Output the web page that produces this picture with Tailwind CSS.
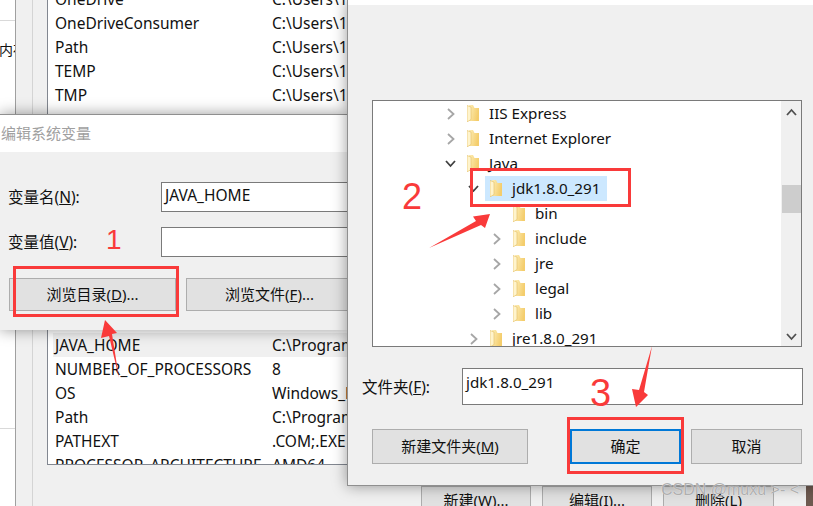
<!DOCTYPE html>
<html lang="zh-CN">
<head>
<meta charset="UTF-8">
<title>编辑系统变量</title>
<script src="https://cdn.jsdelivr.net/npm/@tailwindcss/browser@4"></script>
</head>
<body class="m-0 overflow-hidden bg-white">
<!-- shared tree icons -->
<svg class="absolute w-0 h-0">
  <defs>
    <linearGradient id="folderFill" x1="0" y1="0" x2="1" y2="0.3">
      <stop offset="0" stop-color="#fdeeb8"/>
      <stop offset="1" stop-color="#f4cd6c"/>
    </linearGradient>
  </defs>
  <symbol id="folder" viewBox="0 0 12 17">
    <path d="M2 0h4l1.500 3H12v13H2z" fill="url(#folderFill)"/>
    <path d="M0 .5L4 2v12.500L0 17z" fill="#fff4cc" stroke="#e3bd62" stroke-width=".6"/>
  </symbol>
  <symbol id="closed" viewBox="0 0 8 12">
    <path d="M1 1l5.500 5L1 11" fill="none" stroke="#a6a6a6" stroke-width="1.800"/>
  </symbol>
  <symbol id="open" viewBox="0 0 11 8">
    <path d="M1 1l4.500 5L10 1" fill="none" stroke="#404040" stroke-width="1.800"/>
  </symbol>
</svg>

<div class="relative w-[813px] h-[506px] overflow-hidden text-[15.5px] text-[#111] font-['Noto_Sans','Noto_Sans_CJK_SC',sans-serif]">

  <!-- back window: environment variables -->
  <div class="absolute inset-0 flex">
    <div class="w-[15px] shrink-0 bg-white overflow-hidden flex flex-col">
      <div class="h-[21px] border-b border-[#d9d9d9]"></div>
      <div class="mt-[19px] -ml-[1px] whitespace-nowrap text-[14px] leading-5">内存</div>
      <div class="mt-[368px] border-b border-[#d9d9d9]"></div>
    </div>
    <div class="w-[17px] shrink-0 bg-[#f0f0f0] border-l border-[#a0a0a0]"></div>
    <div class="flex-1 bg-[#f0f0f0] border-l border-[#d4d4d4] pl-[14px] flex flex-col">
      <!-- user vars -->
      <div class="w-[302px] h-[150px] -mt-[13px] bg-white border-l border-[#828790] overflow-hidden shrink-0 leading-6 whitespace-nowrap">
        <div class="flex h-6 pl-[7px]"><span class="w-[217px] shrink-0">OneDrive</span><span>C:\Users\1</span></div>
        <div class="flex h-6 pl-[7px]"><span class="w-[217px] shrink-0">OneDriveConsumer</span><span>C:\Users\1</span></div>
        <div class="flex h-6 pl-[7px]"><span class="w-[217px] shrink-0">Path</span><span>C:\Users\1</span></div>
        <div class="flex h-6 pl-[7px]"><span class="w-[217px] shrink-0">TEMP</span><span>C:\Users\1</span></div>
        <div class="flex h-6 pl-[7px]"><span class="w-[217px] shrink-0">TMP</span><span>C:\Users\1</span></div>
      </div>
      <!-- system vars -->
      <div class="w-[302px] h-[170px] mt-[158px] pt-[38px] bg-white border-l border-b border-[#828790] overflow-hidden shrink-0 leading-6 whitespace-nowrap">
        <div class="flex h-6 ml-[5px] pl-[2px] bg-[#f0f0f0]"><span class="w-[217px] shrink-0">JAVA_HOME</span><span>C:\Program</span></div>
        <div class="flex h-6 pl-[7px]"><span class="w-[217px] shrink-0">NUMBER_OF_PROCESSORS</span><span>8</span></div>
        <div class="flex h-6 pl-[7px]"><span class="w-[217px] shrink-0">OS</span><span>Windows_NT</span></div>
        <div class="flex h-6 pl-[7px]"><span class="w-[217px] shrink-0">Path</span><span>C:\Program</span></div>
        <div class="flex h-6 pl-[7px]"><span class="w-[217px] shrink-0">PATHEXT</span><span>.COM;.EXE</span></div>
        <div class="flex h-6 pl-[7px]"><span class="w-[217px] shrink-0 overflow-hidden">PROCESSOR_ARCHITECTURE</span><span>AMD64</span></div>
      </div>
      <div class="mt-[21px] ml-[374px] flex gap-[11px] text-center whitespace-nowrap text-[15px]">
        <div class="w-[110px] h-[28px] shrink-0 bg-[#e1e1e1] border border-[#adadad] leading-[26px]">新建(W)...</div>
        <div class="w-[110px] h-[28px] shrink-0 bg-[#e1e1e1] border border-[#adadad] leading-[26px]">编辑(I)...</div>
        <div class="w-[111px] h-[28px] shrink-0 bg-[#e1e1e1] border border-[#adadad] leading-[26px]">删除(L)</div>
      </div>
    </div>
  </div>
  <div class="absolute right-0 top-[486px] w-[7px] h-[20px] bg-[#6e5a50]"></div>

  <!-- edit variable dialog -->
  <div class="absolute left-0 top-[114px] w-[347px] h-[216px] bg-[#f0f0f0] border-t border-[#8f8f8f] shadow-[0_0_14px_rgba(0,0,0,0.4)]">
    <div class="h-[37px] bg-white pl-[1px] text-[15px] text-[#a0a0a0] leading-[37px]">编辑系统变量</div>
    <div class="pl-[8px] pt-[30px] flex items-center">
      <span class="w-[153px] leading-5">变量名(<u>N</u>):</span>
      <div class="flex-1 h-[30px] bg-white border border-r-0 border-[#7a7a7a] pl-[3px] leading-[25px]">JAVA_HOME</div>
    </div>
    <div class="pl-[8px] pt-[15px] flex items-center">
      <span class="w-[153px] leading-5">变量值(<u>V</u>):</span>
      <div class="flex-1 h-[30px] bg-white border border-r-0 border-[#7a7a7a]"></div>
    </div>
    <div class="pl-[9px] pt-[21px] flex gap-[10px] text-center text-[15px]">
      <div class="w-[167px] h-[33px] bg-[#e1e1e1] border border-[#adadad] leading-[31px]">浏览目录(<u>D</u>)...</div>
      <div class="flex-1 h-[33px] pl-[5px] bg-[#e1e1e1] border border-r-0 border-[#adadad] leading-[31px]">浏览文件(<u>F</u>)...</div>
    </div>
  </div>

  <!-- browse folder dialog -->
  <div class="absolute left-[347px] top-0 w-[480px] h-[486px] bg-[#f0f0f0] border-l border-b border-[#8f8f8f] shadow-[0_0_14px_rgba(0,0,0,0.4)]">
    <div class="h-[5px] bg-white"></div>
    <div class="ml-[24px] mt-[95px] w-[430px] h-[247px] flex bg-white border border-[#7a7a7a] overflow-hidden">
      <div class="flex-1 leading-[25px] text-[15.2px]">
        <div class="flex items-center h-[25px] pl-[74px]">
          <svg class="w-[8px] h-[12px] mr-[12px] shrink-0"><use href="#closed"/></svg>
          <svg class="w-[12px] h-[17px] mr-[10px] shrink-0"><use href="#folder"/></svg>
          <span>IIS Express</span>
        </div>
        <div class="flex items-center h-[25px] pl-[74px]">
          <svg class="w-[8px] h-[12px] mr-[12px] shrink-0"><use href="#closed"/></svg>
          <svg class="w-[12px] h-[17px] mr-[10px] shrink-0"><use href="#folder"/></svg>
          <span>Internet Explorer</span>
        </div>
        <div class="flex items-center h-[25px] pl-[72px]">
          <svg class="w-[11px] h-[8px] mr-[11px] shrink-0"><use href="#open"/></svg>
          <svg class="w-[12px] h-[17px] mr-[10px] shrink-0"><use href="#folder"/></svg>
          <span>Java</span>
        </div>
        <div class="flex items-center h-[25px] pl-[95px]">
          <svg class="w-[11px] h-[8px] mr-[6px] shrink-0"><use href="#open"/></svg>
          <div class="flex items-center h-[25px] w-[122px] pl-[5px] bg-[#cce8ff]">
            <svg class="w-[12px] h-[17px] mr-[10px] shrink-0"><use href="#folder"/></svg>
            <span>jdk1.8.0_291</span>
          </div>
        </div>
        <div class="flex items-center h-[25px] pl-[120px]">
          <div class="w-[20px] shrink-0"></div>
          <svg class="w-[12px] h-[17px] mr-[10px] shrink-0"><use href="#folder"/></svg>
          <span>bin</span>
        </div>
        <div class="flex items-center h-[25px] pl-[120px]">
          <svg class="w-[8px] h-[12px] mr-[12px] shrink-0"><use href="#closed"/></svg>
          <svg class="w-[12px] h-[17px] mr-[10px] shrink-0"><use href="#folder"/></svg>
          <span>include</span>
        </div>
        <div class="flex items-center h-[25px] pl-[120px]">
          <svg class="w-[8px] h-[12px] mr-[12px] shrink-0"><use href="#closed"/></svg>
          <svg class="w-[12px] h-[17px] mr-[10px] shrink-0"><use href="#folder"/></svg>
          <span>jre</span>
        </div>
        <div class="flex items-center h-[25px] pl-[120px]">
          <svg class="w-[8px] h-[12px] mr-[12px] shrink-0"><use href="#closed"/></svg>
          <svg class="w-[12px] h-[17px] mr-[10px] shrink-0"><use href="#folder"/></svg>
          <span>legal</span>
        </div>
        <div class="flex items-center h-[25px] pl-[120px]">
          <svg class="w-[8px] h-[12px] mr-[12px] shrink-0"><use href="#closed"/></svg>
          <svg class="w-[12px] h-[17px] mr-[10px] shrink-0"><use href="#folder"/></svg>
          <span>lib</span>
        </div>
        <div class="flex items-center h-[25px] pl-[97px]">
          <svg class="w-[8px] h-[12px] mr-[12px] shrink-0"><use href="#closed"/></svg>
          <svg class="w-[12px] h-[17px] mr-[10px] shrink-0"><use href="#folder"/></svg>
          <span>jre1.8.0_291</span>
        </div>
      </div>
      <!-- scrollbar -->
      <div class="w-[20px] bg-[#f0f0f0] flex flex-col items-center">
        <svg class="w-[11px] h-[8px] mt-[7px] shrink-0" viewBox="0 0 11 8" fill="none" stroke="#505050" stroke-width="1.800"><path d="M1 7l4.500-5L10 7"/></svg>
        <div class="w-[19px] h-[28px] mt-[69px] bg-[#cdcdcd] shrink-0"></div>
        <svg class="w-[11px] h-[8px] mt-[120px] shrink-0" viewBox="0 0 11 8" fill="none" stroke="#505050" stroke-width="1.800"><path d="M1 1l4.500 5L10 1"/></svg>
      </div>
    </div>
    <div class="pl-[14px] mt-[21px] flex items-center">
      <span class="w-[100px] leading-5">文件夹(<u>F</u>):</span>
      <div class="w-[341px] h-[37px] bg-white border border-[#7a7a7a] pl-[3px] text-[15.2px] leading-[26px]">jdk1.8.0_291</div>
    </div>
    <div class="pl-[24px] mt-[24px] flex text-center text-[15px]">
      <div class="w-[156px] h-[35px] bg-[#e1e1e1] border border-[#adadad] leading-[33px]">新建文件夹(<u>M</u>)</div>
      <div class="w-[111px] h-[35px] ml-[42px] bg-[#e1e1e1] border-2 border-[#0078d7] leading-[31px]">确定</div>
      <div class="w-[111px] h-[35px] ml-[10px] bg-[#e1e1e1] border border-[#adadad] leading-[33px]">取消</div>
    </div>
  </div>

  <!-- red annotations -->
  <svg class="absolute inset-0 pointer-events-none" width="813" height="506" viewBox="0 0 813 506">
    <g fill="none" stroke="#f93a3a" stroke-width="3">
      <rect x="14.500" y="267.500" width="163" height="48"/>
      <rect x="471.500" y="169.500" width="158" height="36"/>
      <rect x="568.500" y="418.500" width="114" height="54"/>
    </g>
    <g fill="#f93a3a">
      <polygon points="105,320 117,333 112,334 119,378 109,336 101,338"/>
      <polygon points="490,214 473,216.500 476,221 429,248 481,225 485,228"/>
      <polygon points="652,346 644,392 648,395 636,407 632,389 639,390"/>
    </g>
  </svg>
  <span class="absolute left-[106px] top-[222px] text-[28px] leading-9 text-[#f93a3a] font-['Liberation_Sans',sans-serif]">1</span>
  <span class="absolute left-[402px] top-[179px] text-[36px] leading-9 text-[#f93a3a] font-['Liberation_Sans',sans-serif]">2</span>
  <span class="absolute left-[590px] top-[375px] text-[38px] leading-9 text-[#f93a3a] font-['Liberation_Sans',sans-serif]">3</span>

  <!-- watermark -->
  <span class="absolute left-[661px] top-[480px] text-[16px] leading-5 text-[#8f8f8f]/70 whitespace-nowrap font-['Liberation_Sans',sans-serif] [text-shadow:0_0_1px_#fff]">CSDN @muxu &gt;- &lt;</span>
</div>
</body>
</html>
